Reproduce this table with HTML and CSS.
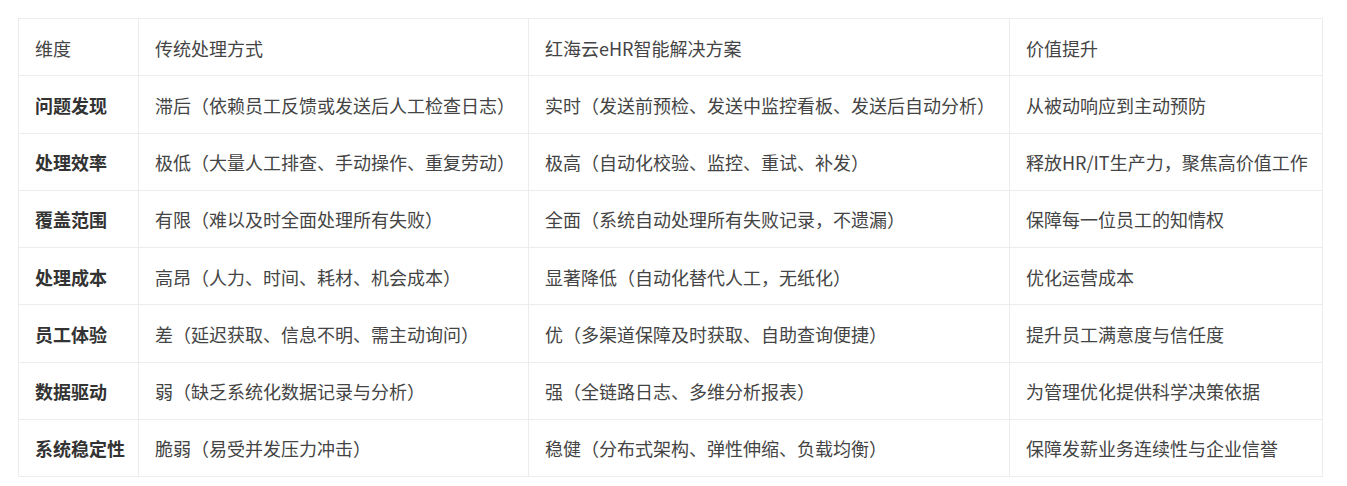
FILE: index.html
```html
<!DOCTYPE html>
<html lang="zh-CN">
<head>
    <meta charset="UTF-8">
    <meta name="viewport" content="width=device-width, initial-scale=1.0">
    <title>红海云eHR智能解决方案对比</title>
    <link rel="stylesheet" href="styles.css">
</head>
<body>
    <div class="wrap">
        <table class="compare">
            <colgroup>
                <col class="c1">
                <col class="c2">
                <col class="c3">
                <col class="c4">
            </colgroup>
            <thead>
                <tr>
                    <th>维度</th>
                    <th>传统处理方式</th>
                    <th>红海云eHR智能解决方案</th>
                    <th>价值提升</th>
                </tr>
            </thead>
            <tbody>
                <tr>
                    <td class="dim">问题发现</td>
                    <td>滞后（依赖员工反馈或发送后人工检查日志）</td>
                    <td>实时（发送前预检、发送中监控看板、发送后自动分析）</td>
                    <td>从被动响应到主动预防</td>
                </tr>
                <tr>
                    <td class="dim">处理效率</td>
                    <td>极低（大量人工排查、手动操作、重复劳动）</td>
                    <td>极高（自动化校验、监控、重试、补发）</td>
                    <td>释放HR/IT生产力，聚焦高价值工作</td>
                </tr>
                <tr>
                    <td class="dim">覆盖范围</td>
                    <td>有限（难以及时全面处理所有失败）</td>
                    <td>全面（系统自动处理所有失败记录，不遗漏）</td>
                    <td>保障每一位员工的知情权</td>
                </tr>
                <tr>
                    <td class="dim">处理成本</td>
                    <td>高昂（人力、时间、耗材、机会成本）</td>
                    <td>显著降低（自动化替代人工，无纸化）</td>
                    <td>优化运营成本</td>
                </tr>
                <tr>
                    <td class="dim">员工体验</td>
                    <td>差（延迟获取、信息不明、需主动询问）</td>
                    <td>优（多渠道保障及时获取、自助查询便捷）</td>
                    <td>提升员工满意度与信任度</td>
                </tr>
                <tr>
                    <td class="dim">数据驱动</td>
                    <td>弱（缺乏系统化数据记录与分析）</td>
                    <td>强（全链路日志、多维分析报表）</td>
                    <td>为管理优化提供科学决策依据</td>
                </tr>
                <tr>
                    <td class="dim">系统稳定性</td>
                    <td>脆弱（易受并发压力冲击）</td>
                    <td>稳健（分布式架构、弹性伸缩、负载均衡）</td>
                    <td>保障发薪业务连续性与企业信誉</td>
                </tr>
            </tbody>
        </table>
    </div>
</body>
</html>
```

FILE: styles.css
```css
*{
  margin: 0;
  padding: 0;
  box-sizing: border-box;
}

body{
  background-color: #fff;
  font-family: "Noto Sans CJK SC", "Noto Sans", sans-serif;
  color: #444;
}

.wrap{
  padding: 18px;
}

.compare{
  width: 1304px;
  border-collapse: collapse;
  table-layout: fixed;
  font-size: 18px;
}

.c1{ width: 120px; }
.c2{ width: 390px; }
.c3{ width: 481px; }
.c4{ width: 313px; }

.compare th,
.compare td{
  height: 57.25px;
  padding: 2px 16px 0;
  border: 1px solid #ececec;
  text-align: left;
  vertical-align: middle;
  font-weight: 400;
  white-space: nowrap;
  line-height: 1.4;
}

.compare td.dim{
  font-weight: 700;
  color: #333;
}
```
